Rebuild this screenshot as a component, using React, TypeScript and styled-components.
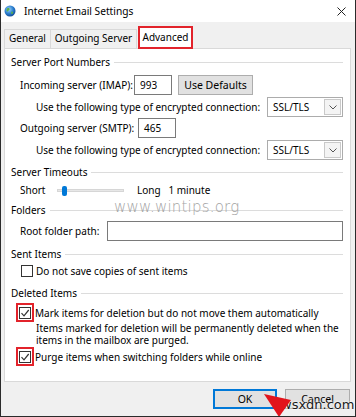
import styled, { createGlobalStyle } from 'styled-components';

const GlobalStyle = createGlobalStyle`
  html, body {
    margin: 0;
    padding: 0;
    background: #fff;
  }
  body {
    font-family: "Noto Sans", "Open Sans", sans-serif;
    font-size: 10px;
    color: #000;
  }
`;

const Window = styled.div`
  position: relative;
  width: 356px;
  height: 417px;
  box-sizing: border-box;
  display: flex;
  flex-direction: column;
  border: 1px solid #2b2b2b;
  border-top: none;
  overflow: hidden;
`;

const TitleBar = styled.div`
  height: 22px;
  flex-shrink: 0;
  display: flex;
  align-items: center;
  padding: 0 9px 0 3px;
  background: #fff;
`;

const Title = styled.span`
  margin-left: 8px;
  font-size: 10.2px;
  flex: 1;
`;

const Body = styled.div`
  flex: 1;
  display: flex;
  flex-direction: column;
  background: #f0f0f0;
  padding: 4px 4px 0 3px;
  min-height: 0;
`;

const TabStrip = styled.div`
  display: flex;
  align-items: flex-end;
  height: 22px;
  position: relative;
  z-index: 1;
`;

const Tab = styled.div<{ $active?: boolean; $w: number }>`
  box-sizing: border-box;
  width: ${(p) => p.$w}px;
  height: ${(p) => (p.$active ? '23px' : '19px')};
  text-align: center;
  line-height: ${(p) => (p.$active ? '18px' : '17px')};
  background: ${(p) => (p.$active ? '#fff' : '#f0f0f0')};
  border: ${(p) => (p.$active ? '2px solid #e2232b' : '1px solid #d9d9d9')};
  border-bottom: ${(p) => (p.$active ? '2px solid #e2232b' : 'none')};
  margin-right: ${(p) => (p.$active ? '0' : '-1px')};
  margin-left: ${(p) => (p.$active ? '2px' : '0')};
  margin-bottom: ${(p) => (p.$active ? '-1px' : '0')};
`;

const Panel = styled.div`
  flex: 1;
  display: flex;
  flex-direction: column;
  background: #fff;
  border: 1px solid #d9d9d9;
  padding: 5px 7px 0 6px;
`;

const GroupHeader = styled.div<{ $mt?: number }>`
  display: flex;
  align-items: center;
  height: 16px;
  margin-top: ${(p) => p.$mt ?? 0}px;
  &::after {
    content: '';
    flex: 1;
    height: 1px;
    background: #dcdcdc;
    margin-left: 4px;
  }
`;

const Row = styled.div<{ $mt?: number; $h?: number; $indent?: number }>`
  display: flex;
  align-items: center;
  height: ${(p) => p.$h ?? 20}px;
  margin-top: ${(p) => p.$mt ?? 0}px;
  padding-left: ${(p) => p.$indent ?? 9}px;
  white-space: nowrap;
`;

const Label = styled.span<{ $w?: number }>`
  width: ${(p) => (p.$w ? `${p.$w}px` : 'auto')};
  flex-shrink: 0;
`;

const TextBox = styled.div<{ $w?: number }>`
  box-sizing: border-box;
  height: 20px;
  width: ${(p) => (p.$w ? `${p.$w}px` : 'auto')};
  flex: ${(p) => (p.$w ? '0 0 auto' : '1')};
  border: 1px solid #7a7a7a;
  background: #fff;
  padding-left: 5px;
  line-height: 18px;
`;

const Button = styled.div<{ $w: number; $default?: boolean }>`
  box-sizing: border-box;
  width: ${(p) => p.$w}px;
  height: 20px;
  display: flex;
  align-items: center;
  justify-content: center;
  background: #e1e1e1;
  border: ${(p) => (p.$default ? '2px solid #0078d7' : '1px solid #adadad')};
  font-size: 10.5px;
`;

const Select = styled.div`
  box-sizing: border-box;
  width: 76px;
  height: 20px;
  display: flex;
  align-items: center;
  border: 1px solid #acacac;
  background: #fff;
  padding: 1px 1px 1px 5px;
`;

const SelectText = styled.span`
  flex: 1;
`;

const DropButton = styled.div`
  box-sizing: border-box;
  width: 17px;
  height: 16px;
  border: 1px solid #c9c9c9;
  background: #f4f4f4;
  display: flex;
  align-items: center;
  justify-content: center;
`;

const SliderTrack = styled.div`
  position: relative;
  width: 67px;
  height: 3px;
  background: #e7e7e7;
  border: 1px solid #d6d6d6;
  box-sizing: border-box;
  flex-shrink: 0;
`;

const SliderThumb = styled.div`
  position: absolute;
  left: 4px;
  top: -4px;
  width: 5px;
  height: 10px;
  border-radius: 2px;
  background: #0078d7;
`;

const CheckFrame = styled.div<{ $marked?: boolean }>`
  box-sizing: border-box;
  width: ${(p) => (p.$marked ? '18px' : '13px')};
  height: ${(p) => (p.$marked ? '19px' : '13px')};
  margin: ${(p) => (p.$marked ? '0 1px 0 -4px' : '0 3px 0 0')};
  border: ${(p) => (p.$marked ? '2px solid #e2232b' : 'none')};
  display: flex;
  align-items: center;
  justify-content: center;
  flex-shrink: 0;
`;

const CheckBox = styled.div`
  box-sizing: border-box;
  width: 12px;
  height: 12px;
  border: 1px solid #333;
  background: #fff;
  display: flex;
  align-items: center;
  justify-content: center;
`;

const Note = styled.div`
  padding-left: 25px;
  line-height: 12px;
  white-space: nowrap;
`;

const Footer = styled.div`
  height: 34px;
  flex-shrink: 0;
  display: flex;
  justify-content: flex-end;
  align-items: flex-start;
  gap: 8px;
  padding: 7px 1px 0 0;
  box-sizing: border-box;
`;

const WintipsMark = styled.div`
  position: absolute;
  left: 113px;
  top: 198px;
  font-family: "DejaVu Sans", sans-serif;
  font-size: 15px;
  font-weight: 300;
  color: #a3a3a3;
  letter-spacing: 0.2px;
`;

const WsxdnMark = styled.div`
  position: absolute;
  left: 280px;
  top: 397px;
  font-family: "DejaVu Sans", sans-serif;
  font-size: 13px;
  color: #1a1a1a;
  text-shadow: 0 0 2px #fff, 0 0 2px #fff;
`;

const Arrow = styled.svg`
  position: absolute;
  left: 0;
  top: 0;
  pointer-events: none;
`;

function Check() {
  return (
    <svg width="10" height="10" viewBox="0 0 10 10">
      <path d="M1.5 5.2 L4 7.8 L8.7 2" fill="none" stroke="#333" strokeWidth="1.2" />
    </svg>
  );
}

function Chevron() {
  return (
    <svg width="8" height="5" viewBox="0 0 8 5">
      <path d="M0.5 0.5 L4 4 L7.5 0.5" fill="none" stroke="#555" strokeWidth="1" />
    </svg>
  );
}

function Globe() {
  return (
    <svg width="12" height="12" viewBox="0 0 12 12">
      <defs>
        <radialGradient id="g" cx="40%" cy="35%" r="65%">
          <stop offset="0" stopColor="#9fd3f7" />
          <stop offset="0.6" stopColor="#2b7fd0" />
          <stop offset="1" stopColor="#134f9a" />
        </radialGradient>
      </defs>
      <circle cx="6" cy="6" r="5.5" fill="url(#g)" />
      <path d="M3 3.5 C4.5 2.5 6 3.2 5.6 4.6 C5.2 6 3.6 5.4 3.2 7 C2.5 6 2.3 4.5 3 3.5Z" fill="#5bb04a" />
      <path d="M7.5 6.5 C8.8 6.2 9.6 7.2 8.8 8.6 C8 9.5 7 9 7.2 8 Z" fill="#5bb04a" />
    </svg>
  );
}

export default function App() {
  return (
    <>
      <GlobalStyle />
      <Window>
        <TitleBar>
          <Globe />
          <Title>Internet Email Settings</Title>
          <svg width="9" height="9" viewBox="0 0 9 9">
            <path d="M0.5 0.5 L8.5 8.5 M8.5 0.5 L0.5 8.5" stroke="#222" strokeWidth="1" />
          </svg>
        </TitleBar>
        <Body>
          <TabStrip>
            <Tab $w={47}>General</Tab>
            <Tab $w={87}>Outgoing Server</Tab>
            <Tab $w={55} $active>
              Advanced
            </Tab>
          </TabStrip>
          <Panel>
            <GroupHeader>Server Port Numbers</GroupHeader>
            <Row $mt={5}>
              <Label $w={114}>Incoming server (IMAP):</Label>
              <TextBox $w={38}>993</TextBox>
              <Label $w={6} />
              <Button $w={75}>Use Defaults</Button>
            </Row>
            <Row $mt={2} $indent={25}>
              <Label $w={231}>Use the following type of encrypted connection:</Label>
              <Select>
                <SelectText>SSL/TLS</SelectText>
                <DropButton>
                  <Chevron />
                </DropButton>
              </Select>
            </Row>
            <Row $mt={1}>
              <Label $w={118}>Outgoing server (SMTP):</Label>
              <TextBox $w={38}>465</TextBox>
            </Row>
            <Row $mt={2} $indent={25}>
              <Label $w={231}>Use the following type of encrypted connection:</Label>
              <Select>
                <SelectText>SSL/TLS</SelectText>
                <DropButton>
                  <Chevron />
                </DropButton>
              </Select>
            </Row>
            <GroupHeader $mt={4}>Server Timeouts</GroupHeader>
            <Row $mt={2} $h={16}>
              <Label $w={37}>Short</Label>
              <SliderTrack>
                <SliderThumb />
              </SliderTrack>
              <Label $w={13} />
              <Label>Long&nbsp;&nbsp;&nbsp;1 minute</Label>
            </Row>
            <GroupHeader $mt={4}>Folders</GroupHeader>
            <Row $mt={3} $h={19}>
              <Label $w={87}>Root folder path:</Label>
              <TextBox />
            </Row>
            <GroupHeader $mt={6}>Sent Items</GroupHeader>
            <Row $mt={1} $h={16}>
              <CheckFrame>
                <CheckBox />
              </CheckFrame>
              <span>Do not save copies of sent items</span>
            </Row>
            <GroupHeader $mt={6}>Deleted Items</GroupHeader>
            <Row $mt={2} $h={19}>
              <CheckFrame $marked>
                <CheckBox>
                  <Check />
                </CheckBox>
              </CheckFrame>
              <span>Mark items for deletion but do not move them automatically</span>
            </Row>
            <Note>
              Items marked for deletion will be permanently deleted when the
              <br />
              items in the mailbox are purged.
            </Note>
            <Row $mt={1} $h={19}>
              <CheckFrame $marked>
                <CheckBox>
                  <Check />
                </CheckBox>
              </CheckFrame>
              <span>Purge items when switching folders while online</span>
            </Row>
          </Panel>
          <Footer>
            <Button $w={64} $default>
              OK
            </Button>
            <Button $w={65}>Cancel</Button>
          </Footer>
        </Body>
        <WintipsMark>www.wintips.org</WintipsMark>
        <WsxdnMark>wsxdn.com</WsxdnMark>
        <Arrow width="356" height="417" viewBox="0 0 356 417">
          <polygon points="263,394 290,400 278,417" fill="#e2141c" />
        </Arrow>
      </Window>
    </>
  );
}
